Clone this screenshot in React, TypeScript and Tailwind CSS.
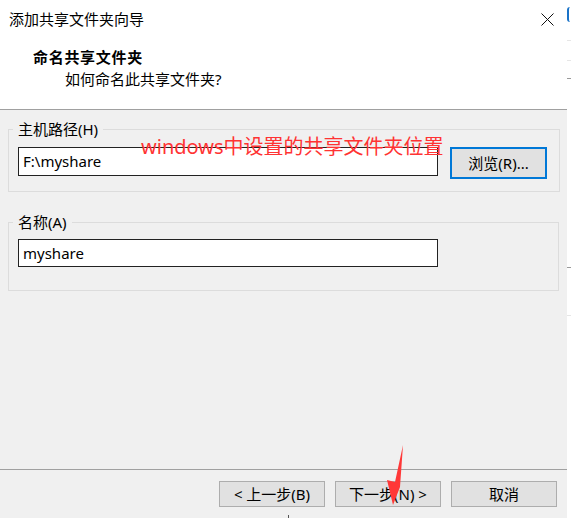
import React from "react";

const font = "font-['Noto_Sans','Noto_Sans_CJK_SC',sans-serif]";

function CloseIcon() {
  return (
    <svg width="13" height="13" viewBox="0 0 13 13" className="block">
      <path d="M0.5 0.5 L12.5 12.5 M12.5 0.5 L0.5 12.5" stroke="#111" strokeWidth="1" fill="none" />
    </svg>
  );
}

function WizardButton({ children }: { children: React.ReactNode }) {
  return (
    <button className="h-[26px] w-[106px] border border-[#adadad] bg-[#e1e1e1] text-[15px] leading-none text-black">
      {children}
    </button>
  );
}

function Group({ label, children }: { label: string; children: React.ReactNode }) {
  return (
    <fieldset className="mx-[8px] border border-[#dcdcdc] pl-[4px] pr-[12px]">
      <legend className="px-[5px] text-[15px] leading-[20px] text-black">{label}</legend>
      {children}
    </fieldset>
  );
}

export default function App() {
  return (
    <div className={`relative flex h-[518px] w-[571px] bg-white ${font}`}>
      <div className="flex h-full w-[567px] flex-col bg-[#f0f0f0]">
        {/* header */}
        <div className="flex h-[110px] flex-col border-b border-[#a0a0a0] bg-white">
          <div className="flex h-[38px] items-center justify-between pl-[9px] pr-[13px]">
            <span className="text-[15px] leading-none text-black">添加共享文件夹向导</span>
            <CloseIcon />
          </div>
          <div className="mt-[9px] pl-[33px] text-[15px] font-bold leading-[20px] tracking-[0.7px] text-black">
            命名共享文件夹
          </div>
          <div className="mt-[2px] pl-[65px] text-[15px] leading-[20px] text-black">
            如何命名此共享文件夹?
          </div>
        </div>

        {/* body */}
        <div className="flex flex-1 flex-col pt-[9px]">
          <Group label="主机路径(H)">
            <div className="mt-[8px] flex items-start gap-[12px] pb-[12px] pl-[5px]">
              <div className="flex h-[29px] w-[420px] items-center border border-[#222] bg-white pl-[4px] text-[15px] text-black">
                F:\myshare
              </div>
              <button className="h-[32px] w-[97px] border-2 border-[#0078d7] bg-[#e1e1e1] text-[15px] leading-none text-black">
                浏览(R)...
              </button>
            </div>
          </Group>

          <div className="h-[20px]" />

          <Group label="名称(A)">
            <div className="mt-[7px] pb-[23px] pl-[5px]">
              <div className="flex h-[28px] w-[420px] items-center border border-[#222] bg-white pl-[4px] text-[15px] text-black">
                myshare
              </div>
            </div>
          </Group>
        </div>

        {/* footer */}
        <div className="h-[12px] border-t border-[#a0a0a0]" />
        <div className="flex justify-end gap-[10px] pb-[11px] pr-[10px]">
          <WizardButton>&lt; 上一步(B)</WizardButton>
          <WizardButton>下一步(N) &gt;</WizardButton>
          <WizardButton>取消</WizardButton>
        </div>
      </div>

      {/* sliver of the window behind */}
      <div className="flex w-[4px] flex-col bg-white">
        <div className="mt-[7px] h-[15px] w-[3px] rounded-l-full border-l-2 border-[#1a73c8]" />
        <div className="mt-[18px] h-px bg-[#e6e6e6]" />
        <div className="mt-[19px] h-px bg-[#e6e6e6]" />
        <div className="mt-[17px] h-px bg-[#9a9a9a]" />
        <div className="mt-[188px] h-px bg-[#9a9a9a]" />
        <div className="mt-[47px] h-px bg-[#e6e6e6]" />
      </div>

      {/* annotations drawn over the screenshot */}
      <div className="pointer-events-none absolute left-[141px] top-[137px] whitespace-nowrap text-[20px] leading-[20px] text-[#ff3333]">
        windows中设置的共享文件夹位置
      </div>
      <svg className="pointer-events-none absolute left-0 top-0" width="571" height="518">
        <polygon points="403,445 400,487 393,505 387,480 395,482" fill="#ff3838" />
        <line x1="288.5" y1="515" x2="288.5" y2="518" stroke="#555" strokeWidth="1" />
      </svg>
    </div>
  );
}
